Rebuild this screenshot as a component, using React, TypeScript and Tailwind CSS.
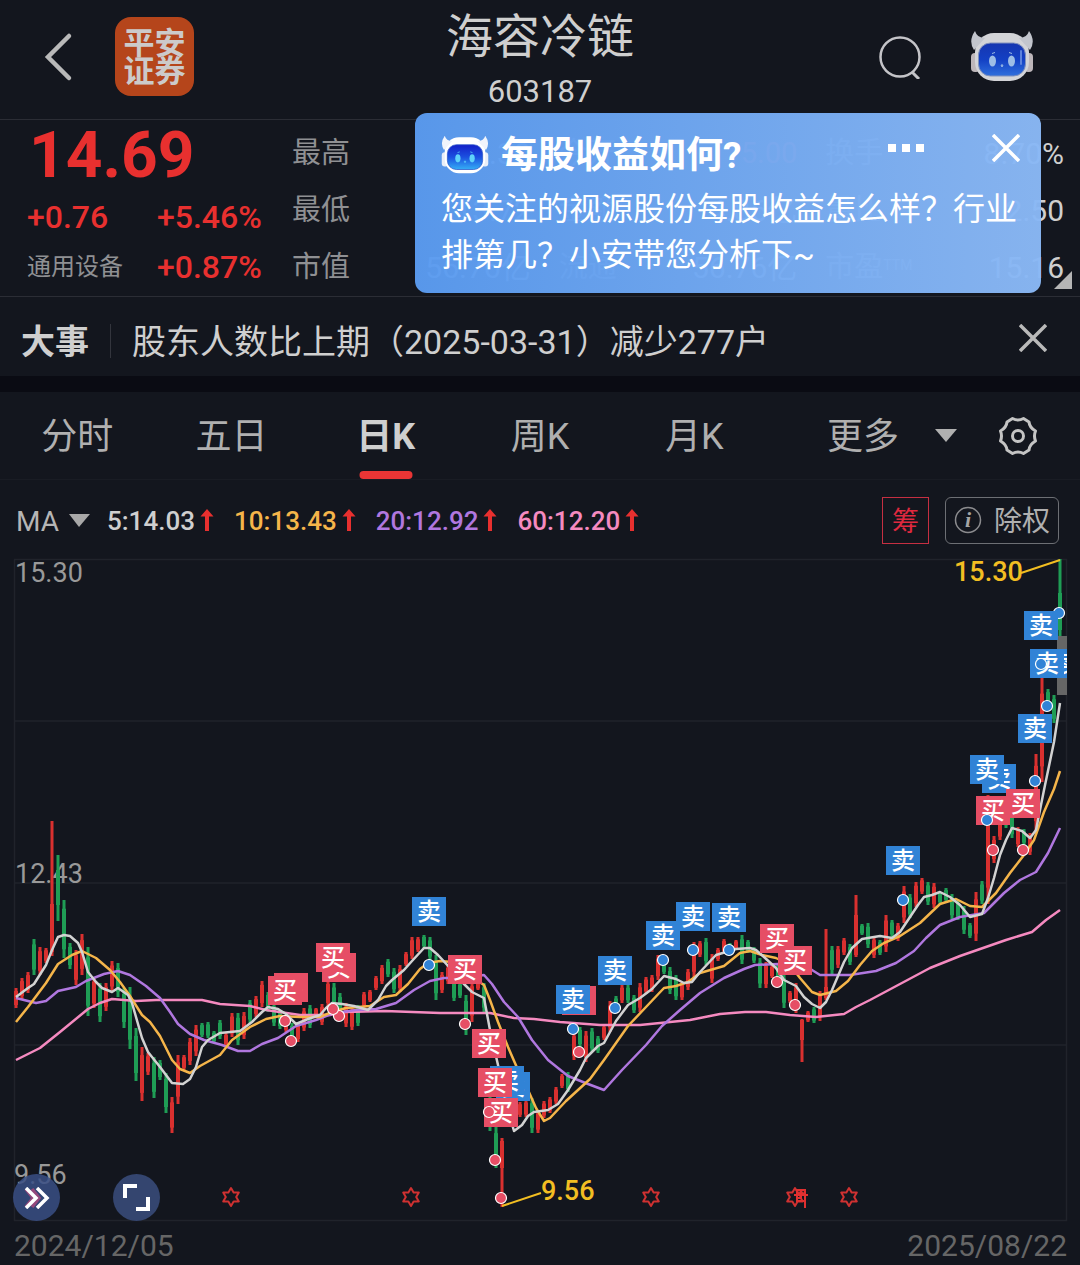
import { useState } from "react";

const UP = "#d9302f";
const DOWN = "#1f9d55";
const BUY = "#e64e65";
const SELL = "#3183d6";

// high, low, up(1)/down(0), then body top and bottom where the wick is long
const CANDLES: number[][] = [
  [988, 1008, 1], [978, 999, 1], [972, 993, 1], [939, 975, 0], [947, 975, 1], [948, 963, 1],
  [821, 956, 1, 904, 952], [855, 921, 0, 870, 905], [900, 958, 0], [943, 969, 0], [950, 985, 1], [934, 975, 1],
  [947, 1016, 0], [977, 1008, 1], [983, 1022, 0], [983, 1011, 1], [961, 991, 1], [963, 997, 0],
  [988, 1028, 0], [987, 1049, 0], [1028, 1081, 0], [1047, 1101, 1], [1053, 1075, 1], [1057, 1098, 0],
  [1060, 1080, 0], [1073, 1113, 0], [1097, 1133, 1], [1055, 1104, 1], [1055, 1070, 1], [1038, 1065, 1],
  [1025, 1056, 1], [1023, 1037, 0], [1022, 1038, 0], [1031, 1043, 0], [1020, 1039, 0], [1033, 1047, 1],
  [1013, 1037, 1], [1013, 1045, 0], [1012, 1039, 1], [1000, 1023, 0], [996, 1017, 1], [981, 1007, 1],
  [992, 1012, 0], [1003, 1026, 0], [1010, 1029, 0], [1017, 1032, 1], [1023, 1043, 0], [1022, 1042, 1],
  [1008, 1031, 1], [1005, 1028, 0], [1008, 1017, 1], [1004, 1025, 1], [980, 1007, 1], [983, 1013, 0],
  [993, 1020, 0], [1003, 1027, 1], [1008, 1030, 1], [1005, 1026, 0], [992, 1008, 1], [990, 1002, 1],
  [976, 990, 1], [965, 984, 1], [959, 977, 0], [968, 993, 0], [965, 992, 1], [952, 966, 1],
  [937, 959, 1], [937, 952, 1], [935, 948, 0], [937, 960, 0], [955, 1000, 0], [972, 993, 1],
  [965, 984, 1], [980, 1001, 0], [982, 998, 0], [995, 1035, 0], [980, 1022, 1], [980, 990, 1],
  [983, 1012, 0], [1097, 1131, 0], [1127, 1168, 0], [1138, 1207, 1, 1141, 1168], [1100, 1120, 1], [1100, 1118, 0],
  [1102, 1117, 1], [1100, 1117, 1], [1098, 1133, 0], [1110, 1133, 1], [1101, 1118, 1], [1097, 1113, 1],
  [1087, 1104, 1], [1074, 1088, 1], [1072, 1092, 0], [1032, 1060, 1], [1027, 1047, 0], [1031, 1062, 1],
  [1028, 1052, 0], [1036, 1053, 0], [1025, 1040, 1], [1001, 1032, 1], [996, 1013, 0], [985, 1003, 1],
  [985, 1003, 0], [995, 1013, 0], [983, 1012, 1], [977, 994, 1], [975, 992, 1], [955, 980, 1],
  [960, 974, 0], [967, 994, 0], [975, 1000, 0], [982, 1000, 1], [969, 990, 1], [942, 977, 1],
  [941, 957, 1], [938, 965, 0], [954, 983, 1], [948, 961, 1], [939, 953, 1], [943, 955, 0],
  [940, 950, 1], [935, 964, 0], [940, 953, 0], [947, 963, 0], [958, 988, 0], [962, 988, 1],
  [965, 978, 1], [963, 980, 0], [973, 1008, 0], [991, 1003, 1], [983, 1013, 1], [1019, 1062, 1, 1020, 1040],
  [1011, 1022, 1], [1007, 1023, 0], [991, 1021, 1], [929, 1000, 1, 987, 998], [946, 974, 0], [946, 968, 1],
  [938, 955, 1], [944, 965, 0], [895, 957, 1, 915, 955], [924, 935, 0], [923, 948, 0], [937, 958, 1],
  [940, 955, 0], [915, 952, 1], [920, 937, 0], [923, 941, 1], [886, 923, 1], [894, 918, 0],
  [882, 907, 1], [878, 894, 1], [882, 905, 0], [883, 908, 1], [892, 904, 0], [888, 902, 0],
  [894, 919, 0], [900, 920, 0], [906, 934, 0], [923, 938, 0], [892, 941, 1], [881, 904, 0],
  [795, 904, 1], [836, 863, 1], [817, 840, 1], [810, 828, 0], [813, 838, 0], [827, 847, 1],
  [829, 845, 0], [833, 855, 1], [754, 833, 1], [678, 782, 1], [689, 710, 0], [695, 723, 0],
  [559, 636, 0, 593, 630],
];

const LINES = [
  {
    color: "#f58ac0",
    points:
      "16,1060 40,1048 60,1032 88,1009 100,1003 112,999 136,1001 156,1000 202,1000 220,1004 250,1006 266,1010 300,1015 330,1015 345,1012 385,1011 440,1013 490,1013 514,1018 534,1019 560,1022 600,1025 640,1025 690,1020 720,1014 745,1012 766,1012 790,1015 816,1017 844,1014 856,1007 870,1000 900,984 930,968 960,956 1006,940 1032,932 1046,920 1060,910",
  },
  {
    color: "#b077df",
    points:
      "16,998 28,1001 36,1003 46,1001 58,991 76,987 86,981 104,974 118,971 130,975 146,986 160,998 170,1012 178,1024 190,1034 204,1040 222,1045 238,1051 250,1051 262,1044 278,1038 296,1026 316,1020 334,1013 356,1010 376,1009 396,1003 414,990 430,981 444,978 460,978 484,975 492,984 504,1002 518,1017 532,1040 548,1060 568,1076 588,1084 604,1090 622,1070 646,1045 662,1026 680,1010 700,993 724,978 744,969 755,965 778,964 800,966 812,970 820,975 850,975 876,971 896,963 914,951 926,938 940,925 960,917 984,913 1004,893 1020,880 1036,872 1048,853 1060,828",
  },
  {
    color: "#f5b54a",
    points:
      "16,1022 28,1007 46,983 58,964 72,955 82,951 96,958 110,970 120,982 130,996 142,1015 150,1022 160,1036 172,1060 180,1069 190,1073 200,1066 220,1055 232,1040 250,1027 266,1019 280,1016 300,1017 320,1017 332,1012 346,1008 370,1006 384,997 396,995 408,984 420,969 428,963 440,961 452,962 470,976 484,985 490,1000 498,1022 508,1047 518,1070 528,1090 536,1108 544,1121 550,1118 566,1101 590,1079 604,1060 628,1026 646,1007 664,988 676,986 688,982 700,973 724,966 740,953 750,951 762,955 776,958 790,965 800,978 812,992 820,995 836,991 848,981 860,965 872,951 884,943 900,936 920,923 940,904 956,899 970,906 982,907 996,893 1010,873 1024,855 1034,840 1044,812 1054,789 1060,771",
  },
  {
    color: "#d2d2d2",
    points:
      "16,997 28,988 34,984 46,965 52,950 58,937 64,935 70,936 78,943 82,952 88,972 96,982 102,988 112,992 118,988 128,995 132,1003 142,1038 148,1052 160,1067 172,1083 183,1084 190,1079 196,1067 202,1047 208,1040 220,1033 240,1031 252,1022 262,1012 268,1007 278,1009 286,1014 296,1024 308,1019 320,1015 326,1008 332,1003 342,1004 354,1006 368,1010 378,1000 386,986 392,980 404,970 412,961 424,948 430,948 438,955 450,968 460,980 472,992 484,998 490,1030 498,1065 508,1110 514,1131 522,1125 528,1116 534,1112 548,1110 558,1104 568,1090 580,1070 586,1058 598,1046 604,1043 616,1021 628,1005 640,998 652,989 664,976 676,979 684,983 692,982 700,972 716,955 736,949 750,948 756,950 764,957 776,968 784,980 796,986 804,997 812,1004 820,1008 826,1002 832,990 838,976 844,962 852,948 862,939 880,936 892,938 900,932 908,920 918,905 924,897 932,895 940,892 950,897 960,905 970,917 982,914 988,898 994,878 1000,855 1006,840 1012,828 1022,831 1030,838 1036,830 1044,790 1054,742 1060,703",
  },
];

const FLAGS: [string, number, number][] = [
  ["买", 274, 973], ["买", 268, 976], ["买", 322, 953], ["买", 316, 943], ["卖", 412, 897],
  ["买", 448, 955], ["买", 472, 1029], ["卖", 496, 1072], ["卖", 490, 1066], ["买", 478, 1068],
  ["买", 484, 1098], ["买", 562, 986], ["卖", 556, 985], ["卖", 598, 956], ["卖", 646, 921],
  ["卖", 676, 902], ["卖", 712, 903], ["买", 760, 924], ["买", 778, 946], ["卖", 886, 846],
  ["卖", 982, 764], ["卖", 970, 755], ["买", 976, 796], ["买", 1006, 789], ["卖", 1018, 714],
  ["卖", 1054, 649], ["卖", 1030, 649],
];

const BUY_DOTS = [
  [285, 1021], [291, 1041], [339, 1016], [333, 1009], [465, 1024], [489, 1112], [495, 1160],
  [501, 1198], [579, 1052], [777, 982], [795, 1005], [993, 850], [1023, 850],
];
const SELL_DOTS = [
  [429, 965], [573, 1029], [615, 1008], [663, 960], [693, 950], [729, 950], [903, 900],
  [987, 820], [1035, 781], [1047, 706], [1041, 664], [1059, 613],
];

const STAR = "0,-9 2.6,-4.5 7.8,-4.5 5.2,0 7.8,4.5 2.6,4.5 0,9 -2.6,4.5 -7.8,4.5 -5.2,0 -7.8,-4.5 -2.6,-4.5";

const STATS = [
  [["最高", "15.30"], ["最低", "13.72"], ["市值", "56.76亿"]],
  [["今开", "15.00"], ["金额", "4.86亿"], ["流通", "56.76亿"]],
  [["换手", "8.70%"], ["量比", "2.50"], ["市盈", "15.16"]],
];

const TABS = ["分时", "五日", "日K", "周K", "月K"];

const AVERAGES = [
  { text: "5:14.03", color: "text-[#cfcfcf]" },
  { text: "10:13.43", color: "text-[#f5b54a]" },
  { text: "20:12.92", color: "text-[#b077df]" },
  { text: "60:12.20", color: "text-[#f58ac0]" },
];

function Robot({ className, id, dim }: { className: string; id: string; dim?: boolean }) {
  const eye = dim ? "#9dbde6" : "#5fd3fa";
  return (
    <svg viewBox="0 0 64 52" className={className} aria-hidden="true">
      <defs>
        <linearGradient id={id} x1="0" y1="0" x2="0" y2="1">
          <stop offset="0" stopColor={dim ? "#1636b0" : "#1420c8"} />
          <stop offset="0.5" stopColor={dim ? "#1340c4" : "#1b50e0"} />
          <stop offset="1" stopColor={dim ? "#2f6fdc" : "#35aef5"} />
        </linearGradient>
      </defs>
      <rect x="1" y="23" width="9" height="19" rx="4" fill={dim ? "#bdb6ba" : "#e9eef8"} />
      <rect x="54" y="23" width="9" height="19" rx="4" fill={dim ? "#bdb6ba" : "#e9eef8"} />
      <rect x="5" y="3" width="54" height="48" rx="19" fill={dim ? "#d3d4d8" : "#fff"} />
      <path d="M5 1Q-2 11 4 20L15 8Q7 8 5 1ZM59 1Q66 11 60 20L49 8Q57 8 59 1Z" fill={dim ? "#c2c5cd" : "#f1f4fb"} />
      <rect x="8.500" y="13" width="47" height="33" rx="12" fill={`url(#${id})`} stroke={dim ? "#8091bd" : "#2a55c8"} />
      <ellipse cx="22.500" cy="31" rx="3.500" ry="5.500" fill={eye} />
      <ellipse cx="41.500" cy="31" rx="3.500" ry="5.500" fill={eye} />
      <path d="M22 23.500l3-1M42 23.500l-3-1M31 35h2l-1 2z" stroke={eye} fill="none" />
      {dim && <path d="M51 21V34" stroke="#5d83dd" strokeWidth="2" strokeLinecap="round" />}
    </svg>
  );
}

function Cross({ className }: { className: string }) {
  return (
    <svg viewBox="0 0 28 28" className={className} fill="none" stroke="currentColor" strokeWidth="3.500" aria-hidden="true">
      <path d="M1 1 27 27M27 1 1 27" />
    </svg>
  );
}

function Header() {
  return (
    <header className="relative flex h-[120px] items-center justify-between border-b border-[#2b2d35] pr-[46px] pl-[44px]">
      <div className="flex items-center gap-[41px] pb-[6px]">
        <button aria-label="返回">
          <svg viewBox="0 0 30 50" className="h-[50px] w-[30px]" fill="none" stroke="#b9b9b9" strokeWidth="4.500" strokeLinecap="round">
            <path d="M25 4 4 25 25 46" />
          </svg>
        </button>
        <div className="flex h-[79px] w-[79px] flex-col items-center justify-center rounded-[16px] bg-[#b5451b] pt-[3px] text-[31px] leading-[28px] font-bold text-[#cccaca]">
          <span>平安</span>
          <span>证券</span>
        </div>
      </div>
      <div className="absolute left-1/2 -translate-x-1/2 text-center text-[#cfcfcf]">
        <h1 className="text-[47px] leading-[64px] font-normal">海容冷链</h1>
        <p className="text-[31px] leading-[46px]">603187</p>
      </div>
      <div className="flex items-center gap-[48px] pb-[8px]">
        <button aria-label="搜索">
          <svg viewBox="0 0 44 46" className="h-[46px] w-[44px]" fill="none" stroke="#c4c4c8" strokeWidth="2.500">
            <circle cx="22" cy="24" r="19.500" />
            <path d="M34 39 41 46" strokeWidth="3" />
          </svg>
        </button>
        <button aria-label="小安">
          <Robot id="visorHeader" dim className="h-[52px] w-[64px]" />
        </button>
      </div>
    </header>
  );
}

function Tip({ onClose }: { onClose: () => void }) {
  return (
    <aside className="absolute top-[-7px] right-[39px] left-[415px] z-10 h-[180px] rounded-[12px] bg-linear-to-r from-[#5a9bf0]/97 to-[#8ab8f5]/97 pl-[26px] text-white">
      <div className="flex items-center pt-[14px] pr-[21px]">
        <Robot id="visorTip" className="h-[39px] w-[48px]" />
        <h2 className="ml-[12px] pt-[3px] text-[37px] leading-[52px] font-bold">每股收益如何?</h2>
        <button aria-label="更多选项" className="mb-[14px] ml-auto flex gap-[6px]">
          <i className="h-[8px] w-[8px] bg-white" />
          <i className="h-[8px] w-[8px] bg-white" />
          <i className="h-[8px] w-[8px] bg-white" />
        </button>
        <button aria-label="关闭提示" className="mb-[14px] ml-[68px]" onClick={onClose}>
          <Cross className="h-[28px] w-[28px]" />
        </button>
      </div>
      <p className="mt-[4px] text-[32px] leading-[46px]">
        您关注的视源股份每股收益怎么样？行业
        <br />
        排第几？小安带您分析下~
      </p>
    </aside>
  );
}

function Quote() {
  const [tip, setTip] = useState(true);
  return (
    <section className="relative flex border-b border-[#2b2d35] pt-[5px] pr-[16px]">
      <div className="w-[292px] shrink-0 pl-[27px] text-[#e8302f]">
        <div className="pl-[2px] text-[64px] leading-[62px] font-bold">14.69</div>
        <div className="flex h-[60px] items-center text-[32px] font-medium">
          <span className="w-[130px]">+0.76</span>
          <span>+5.46%</span>
        </div>
        <div className="flex h-[40px] items-center text-[32px] font-medium">
          <span className="w-[130px] text-[24px] font-normal text-[#8f9093]">通用设备</span>
          <span>+0.87%</span>
        </div>
      </div>
      <div className="flex flex-1 gap-[28px]">
        {STATS.map((col) => (
          <dl key={col[0][0]} className="flex-1">
            {col.map(([label, value]) => (
              <div key={label} className="flex h-[57px] items-center justify-between text-[29px]">
                <dt className="text-[#8f9093]">
                  {label}
                  {label === "市盈" && <sup className="text-[14px]">TTM</sup>}
                </dt>
                <dd className={value === "15.00" ? "text-[#e8302f]" : "text-[30px] text-[#cfcfcf]"}>{value}</dd>
              </div>
            ))}
          </dl>
        ))}
      </div>
      <svg viewBox="0 0 18 18" className="absolute right-[8px] bottom-[7px] h-[18px] w-[18px]" aria-hidden="true">
        <path d="M18 0V18H0Z" fill="#b5b5b5" />
      </svg>
      {tip && <Tip onClose={() => setTip(false)} />}
    </section>
  );
}

function EventBar() {
  return (
    <section className="flex h-[79px] items-center pt-[12px] pr-[33px] pl-[21px] text-[34px] text-[#cfcfcf]">
      <strong className="font-bold">大事</strong>
      <span className="mx-[21px] mb-[4px] h-[34px] w-px bg-[#33353d]" />
      <p>股东人数比上期（2025-03-31）减少277户</p>
      <button aria-label="关闭" className="mb-[10px] ml-auto text-[#b9b9b9]">
        <Cross className="h-[28px] w-[28px]" />
      </button>
    </section>
  );
}

function Tabs() {
  const [active, setActive] = useState("日K");
  return (
    <nav className="flex h-[88px] items-stretch border-b border-[#191c24] text-[36px] text-[#b0b0b0]">
      {TABS.map((tab) => (
        <button
          key={tab}
          onClick={() => setActive(tab)}
          className={tab === active ? "relative w-1/7 pt-[2px] font-bold text-[#cfcfcf]" : "relative w-1/7 pt-[2px]"}
        >
          {tab}
          {tab === active && <span className="absolute bottom-0 left-1/2 h-[8px] w-[53px] -translate-x-1/2 rounded-full bg-[#e93535]" />}
        </button>
      ))}
      <button className="ml-auto flex items-center gap-[36px]">
        <span className="pt-[2px]">更多</span>
        <svg viewBox="0 0 22 13" className="h-[13px] w-[22px]" aria-hidden="true">
          <path d="M0 0H22L11 13Z" fill="#b0b0b0" />
        </svg>
      </button>
      <button aria-label="设置" className="mr-[42px] ml-[41px]">
        <svg viewBox="0 0 40 40" className="h-[40px] w-[40px]" fill="none" stroke="#c4c4c4" strokeWidth="3" strokeLinejoin="round">
          <path d="M14.500 2.500Q20 5.500 25.500 2.500L31 6Q31.500 11.500 37.500 15Q35.500 20 37.500 25Q31.500 28.500 31 34L25.500 37.500Q20 34.500 14.500 37.500L9 34Q8.500 28.500 2.500 25Q4.500 20 2.500 15Q8.500 11.500 9 6Z" />
          <circle cx="20" cy="20" r="5.500" />
        </svg>
      </button>
    </nav>
  );
}

function AverageBar() {
  return (
    <div className="flex h-[76px] items-center pt-[4px] pr-[21px] pl-[16px]">
      <button className="flex items-center gap-[10px] text-[28px] text-[#b5b5b5]">
        <span className="pt-[3px]">MA</span>
        <svg viewBox="0 0 21 13" className="h-[13px] w-[21px]" aria-hidden="true">
          <path d="M0 0H21L10 13Z" fill="#a8a8a8" />
        </svg>
      </button>
      <div className="ml-[17px] flex gap-[20px] text-[26px] font-medium">
        {AVERAGES.map((a) => (
          <span key={a.text} className={`flex items-center gap-[5px] ${a.color}`}>
            <span className="pt-[2px]">{a.text}</span>
            <svg viewBox="0 0 14 22" className="h-[22px] w-[14px]" aria-hidden="true">
              <path d="M7 0 13.500 7.500H9V22H5V7.500H0.500Z" fill="#e8302f" />
            </svg>
          </span>
        ))}
      </div>
      <button className="ml-auto h-[47px] w-[47px] border border-[#c62f42] pt-[3px] text-[27px] leading-[42px] text-[#e0293f]">筹</button>
      <button className="ml-[16px] flex h-[47px] w-[114px] items-center justify-between rounded-[6px] border border-[#6d6f74] px-[8px] text-[28px] text-[#b0b0b0]">
        <svg viewBox="0 0 28 28" className="h-[28px] w-[28px]" aria-hidden="true">
          <circle cx="14" cy="14" r="12.500" fill="none" stroke="#8b8b8e" strokeWidth="1.500" />
          <text x="14" y="21" textAnchor="middle" className="fill-[#a5a5a5] font-['Liberation_Serif'] text-[22px] font-bold italic">i</text>
        </svg>
        <span className="pt-[4px]">除权</span>
      </button>
    </div>
  );
}

function KLine() {
  return (
    <svg viewBox="0 556 1080 666" className="block w-full" role="img" aria-label="日K线图">
      <defs>
        <clipPath id="plot">
          <rect x="13" y="556" width="1054" height="666" />
        </clipPath>
      </defs>
      <path d="M14 559.500H1066.500V1220.500H14.500V559.500M14 721H1066M14 883H1066M14 1045H1066" fill="none" stroke="#20232b" strokeWidth="1.500" />
      <g className="fill-[#999] text-[27px]">
        <text x="15" y="582">15.30</text>
        <text x="15" y="883">12.43</text>
        <text x="14" y="1184">9.56</text>
      </g>
      {CANDLES.map(([high, low, up, top, bottom], i) => {
        const x = 16 + i * 6;
        const t = top ?? high + (low - high) * 0.15;
        const b = bottom ?? low - (low - high) * 0.15;
        return (
          <g key={x} fill={up ? UP : DOWN}>
            <rect x={x - 1.5} y={high} width="3" height={low - high} />
            <rect x={x - 2} y={t} width="4" height={b - t} />
          </g>
        );
      })}
      {LINES.map((line) => (
        <polyline key={line.color} points={line.points} fill="none" stroke={line.color} strokeWidth="2.500" strokeLinejoin="round" />
      ))}
      <path d="M1021 573 1060 560M502 1206 541 1193" stroke="#f2be22" strokeWidth="2" />
      <g className="fill-[#f2be22] text-[27px] font-medium">
        <text x="954" y="581">15.30</text>
        <text x="541" y="1200">9.56</text>
      </g>
      <g clipPath="url(#plot)">
        <rect x="1057" y="636" width="10" height="59" fill="#666" />
        {FLAGS.map(([text, x, y]) => (
          <g key={`${x}-${y}`}>
            <rect x={x} y={y} width="34" height="29" fill={text === "买" ? BUY : SELL} />
            <text x={x + 17} y={y + 23} textAnchor="middle" className="fill-white text-[24px] font-medium">{text}</text>
          </g>
        ))}
        {BUY_DOTS.map(([x, y]) => (
          <circle key={`${x}-${y}`} cx={x} cy={y} r="5.500" fill={BUY} stroke="#fff" strokeWidth="1.200" />
        ))}
        {SELL_DOTS.map(([x, y]) => (
          <circle key={`${x}-${y}`} cx={x} cy={y} r="5.500" fill={SELL} stroke="#fff" strokeWidth="1.200" />
        ))}
        <rect x="1024" y="611" width="34" height="29" fill={SELL} />
        <text x="1041" y="634" textAnchor="middle" className="fill-white text-[24px] font-medium">卖</text>
      </g>
      {[231, 411, 651, 795, 849].map((x) => (
        <polygon key={x} points={STAR} transform={`translate(${x} 1197)`} fill="none" stroke="#cf3131" strokeWidth="2" strokeLinejoin="round" />
      ))}
      <path d="M796 1190H805V1208M797 1190V1194H805M794 1195H808M797 1194V1201H805M801 1190V1198H797" fill="none" stroke="#e03030" strokeWidth="2" />
    </svg>
  );
}

export default function App() {
  return (
    <div className="min-h-screen bg-[#13161e] font-[Roboto,'Noto_Sans_CJK_SC',sans-serif]">
      <Header />
      <Quote />
      <EventBar />
      <div className="h-[16px] bg-[#0a0b13]" />
      <Tabs />
      <AverageBar />
      <div className="relative">
        <KLine />
        <button aria-label="展开" className="absolute bottom-px left-[13px] flex h-[47px] w-[47px] items-center justify-center rounded-full bg-[#3a4f85]/85">
          <svg viewBox="0 0 26 22" className="h-[22px] w-[26px]" fill="none" strokeWidth="3.500">
            <path d="M2 2 9 11 2 20M8 2 15 11 8 20" stroke="#93477a" />
            <path d="M2 1 12 11 2 21M13 1 23 11 13 21" stroke="#fff" />
          </svg>
        </button>
        <button aria-label="全屏" className="absolute bottom-px left-[113px] flex h-[47px] w-[47px] items-center justify-center rounded-full bg-[#34456f]">
          <svg viewBox="0 0 27 27" className="h-[27px] w-[27px]" fill="none" stroke="#fff" strokeWidth="4">
            <path d="M2 14V2H14M25 13V25H13" />
          </svg>
        </button>
      </div>
      <footer className="flex justify-between pt-[4px] pr-[13px] pl-[14px] text-[30px] leading-[39px] text-[#666]">
        <time>2024/12/05</time>
        <time>2025/08/22</time>
      </footer>
    </div>
  );
}
